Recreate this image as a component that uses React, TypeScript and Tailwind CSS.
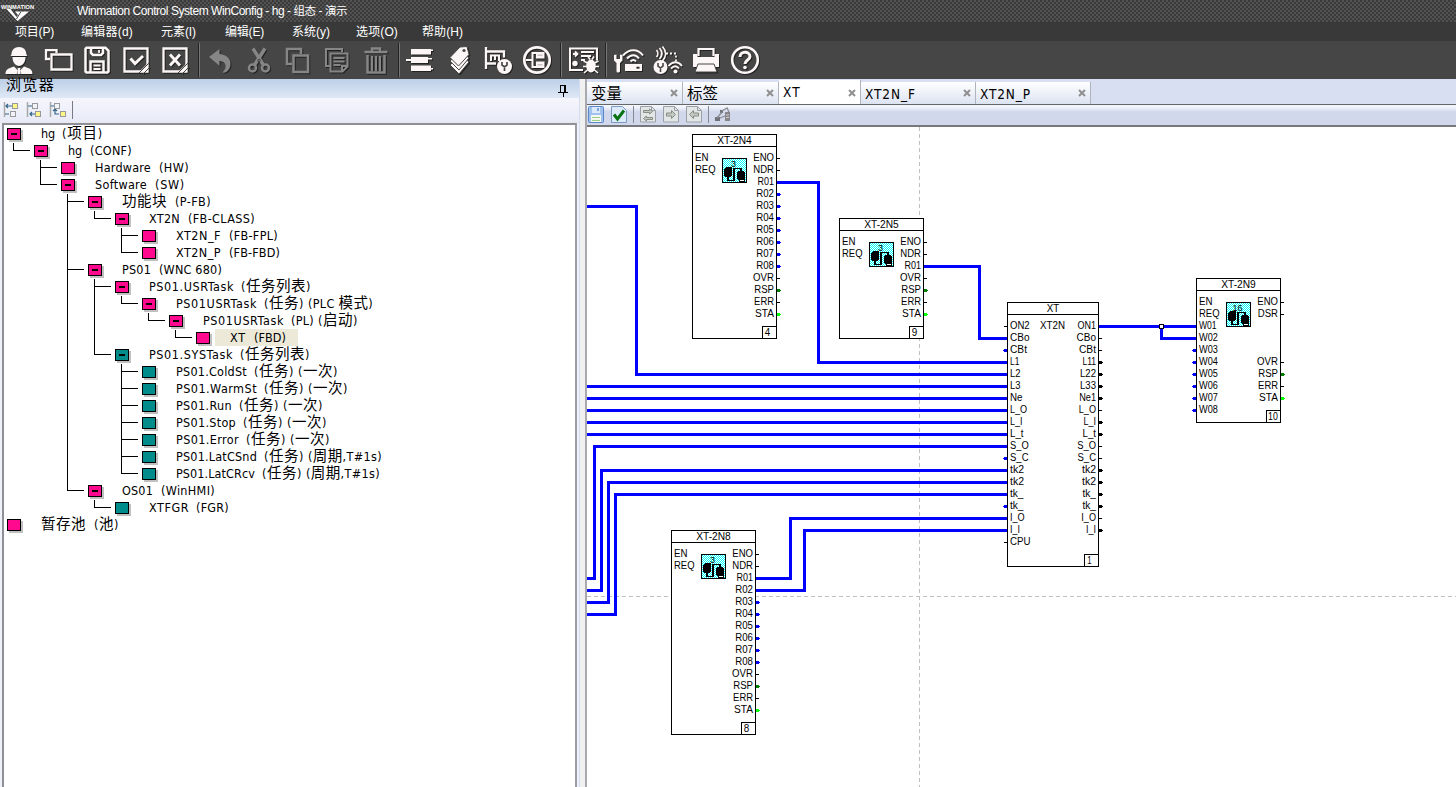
import React, { useLayoutEffect, useRef } from 'react';

/* Text stretched by letter spacing to a given width. */
function Fit({ text, w, className = '', cjk = '' }: { text: string; w: number; className?: string; cjk?: string }) {
  const ref = useRef<HTMLSpanElement>(null);
  useLayoutEffect(() => {
    const el = ref.current;
    if (!el) return;
    el.style.letterSpacing = '0px';
    const natural = el.getBoundingClientRect().width;
    el.style.letterSpacing = `${(w - natural) / text.length}px`;
  }, [text, w]);
  const parts = text.split(/([\u3400-\u9fff]+)/).filter(Boolean);
  return (
    <span className="block shrink-0" style={{ width: w }}>
      <span ref={ref} className={`block w-max whitespace-pre ${className}`}>
        {parts.map((p, i) => (/[\u3400-\u9fff]/.test(p) ? <span key={i} className={cjk}>{p}</span> : p))}
      </span>
    </span>
  );
}

type Seg = [string, number, number];
type Node = { level: number; color: 'pink' | 'teal'; open?: boolean; guides: string; segs: Seg[]; selected?: boolean };

/* guides: one letter per indent column. " " empty, "|" pass, "T" branch, "L" last */
const nodes: Node[] = [
  { level: 0, color: 'pink', open: true, guides: '', segs: [['hg', 41, 55], ['(项目)', 62, 103]] },
  { level: 1, color: 'pink', open: true, guides: 'L', segs: [['hg', 68, 82], ['(CONF)', 90, 132]] },
  { level: 2, color: 'pink', guides: ' T', segs: [['Hardware', 95, 151], ['(HW)', 159, 189]] },
  { level: 2, color: 'pink', open: true, guides: ' L', segs: [['Software', 95, 147], ['(SW)', 155, 185]] },
  { level: 3, color: 'pink', open: true, guides: '  T', segs: [['功能块', 122, 167], ['(P-FB)', 175, 211]] },
  { level: 4, color: 'pink', open: true, guides: '  |L', segs: [['XT2N', 149, 180], ['(FB-CLASS)', 188, 255]] },
  { level: 5, color: 'pink', guides: '  | T', segs: [['XT2N_F', 176, 221], ['(FB-FPL)', 229, 278]] },
  { level: 5, color: 'pink', guides: '  | L', segs: [['XT2N_P', 176, 221], ['(FB-FBD)', 229, 280]] },
  { level: 3, color: 'pink', open: true, guides: '  T', segs: [['PS01', 122, 151], ['(WNC 680)', 159, 222]] },
  { level: 4, color: 'pink', open: true, guides: '  |T', segs: [['PS01.USRTask', 149, 234], ['(任务列表)', 241, 311]] },
  { level: 5, color: 'pink', open: true, guides: '  ||L', segs: [['PS01USRTask', 176, 257], ['(任务)', 264, 304], ['(PLC 模式)', 308, 373]] },
  { level: 6, color: 'pink', open: true, guides: '  || L', segs: [['PS01USRTask', 203, 284], ['(PL)', 291, 314], ['(启动)', 318, 358]] },
  { level: 7, color: 'pink', guides: '  ||  L', segs: [['XT', 230, 246], ['(FBD)', 254, 286]], selected: true },
  { level: 4, color: 'teal', open: true, guides: '  |L', segs: [['PS01.SYSTask', 149, 233], ['(任务列表)', 240, 310]] },
  { level: 5, color: 'teal', guides: '  | T', segs: [['PS01.ColdSt', 176, 247], ['(任务)', 254, 294], ['(一次)', 298, 338]] },
  { level: 5, color: 'teal', guides: '  | T', segs: [['PS01.WarmSt', 176, 257], ['(任务)', 264, 304], ['(一次)', 308, 348]] },
  { level: 5, color: 'teal', guides: '  | T', segs: [['PS01.Run', 176, 232], ['(任务)', 239, 279], ['(一次)', 283, 323]] },
  { level: 5, color: 'teal', guides: '  | T', segs: [['PS01.Stop', 176, 236], ['(任务)', 243, 283], ['(一次)', 287, 327]] },
  { level: 5, color: 'teal', guides: '  | T', segs: [['PS01.Error', 176, 239], ['(任务)', 246, 286], ['(一次)', 290, 330]] },
  { level: 5, color: 'teal', guides: '  | T', segs: [['PS01.LatCSnd', 176, 257], ['(任务)', 264, 304], ['(周期,T#1s)', 308, 382]] },
  { level: 5, color: 'teal', guides: '  | L', segs: [['PS01.LatCRcv', 176, 255], ['(任务)', 262, 302], ['(周期,T#1s)', 306, 380]] },
  { level: 3, color: 'pink', open: true, guides: '  L', segs: [['OS01', 122, 153], ['(WinHMI)', 161, 215]] },
  { level: 4, color: 'teal', guides: '   L', segs: [['XTFGR', 149, 189], ['(FGR)', 196, 229]] },
  { level: 0, color: 'pink', guides: '', segs: [['暂存池', 41, 86], ['(池)', 94, 119]] },
];

function Guide({ kind }: { kind: string }) {
  return (
    <svg width="27" height="17" className="shrink-0" shapeRendering="crispEdges" fill="#000">
      {(kind === '|' || kind === 'T') && <rect x="6" y="0" width="1" height="17" />}
      {kind === 'L' && <rect x="6" y="0" width="1" height="8" />}
      {(kind === 'T' || kind === 'L') && <rect x="6" y="7" width="17" height="1" />}
    </svg>
  );
}

function TreeRow({ node }: { node: Node }) {
  let x = 7 + 27 * node.level + 16;
  return (
    <div className="flex h-[17px] items-start">
      {node.guides.split('').map((g, i) => <Guide key={i} kind={g} />)}
      <svg width="16" height="17" className="shrink-0" shapeRendering="crispEdges">
        <rect x="2" y="4" width="14" height="12" fill="#c0c0c0" />
        <rect x="0" y="2" width="14" height="12" fill="#000" />
        <rect x="1" y="3" width="12" height="10" fill={node.color === 'pink' ? '#ff0a8f' : '#008c8a'} />
        {node.open && <rect x="4" y="7" width="6" height="2" fill="#000" />}
      </svg>
      <div className={`-mt-px flex h-[17px] ${node.selected ? 'bg-[linear-gradient(to_right,transparent_3px,#ece9d8_3px)] pr-3' : ''}`}>
        {node.segs.map(([t, a, b], i) => {
          const gap = a - x;
          x = b;
          return (
            <span key={i} className="block h-[17px]" style={{ marginLeft: gap }}>
              <Fit text={t} w={b - a} className="h-[17px] text-[12.5px] leading-[17px]" cjk="text-[14.5px] leading-[14px]" />
            </span>
          );
        })}
      </div>
    </div>
  );
}

/* ---------- toolbar icons, 28px grid ---------- */
const S = { fill: 'none', stroke: 'currentColor' } as const;
const icons: Record<string, React.ReactNode> = {
  user: <g fill="currentColor"><path d="M6.5 8.5c0-4.500 3-7.500 7.500-7.500s7.500 3 7.500 7.500l1 1.500h-17z" /><path d="M7.500 11h13c0 5.500-3 9-6.500 9s-6.500-3.500-6.500-9z" /><path d="M.5 28c0-4.500 2.500-5.500 8.500-7.500l4 4-1.300 3.500zM27.500 28c0-4.500-2.500-5.500-8.500-7.500l-4 4 1.300 3.500z" /><path d="M12.500 22h3l-.5 2 .7 4h-3.400l.7-4z" /></g>,
  windows: <g {...S} strokeWidth="2.300"><path d="M6 13H2V4.200h10.500V7" /><path d="M7.500 8.500H27.500V23.500H7.500z" /></g>,
  save: <g {...S} strokeWidth="2.500"><path d="M3.500 1.800H22.500l3 3v20.700l-1 1H3.500l-1-1V2.800z" /><path d="M8 2v5l2 2h8l2-2V2M7.500 26V15.500h13V26" /><path d="M16 4v3M10.500 19.500h7M10.500 23h7" strokeWidth="1.800" /></g>,
  check: <g {...S} strokeWidth="2.300"><path d="M2.500 2.500h23v23h-23z" /><path d="M8.500 12.500l4.500 5L21 10" strokeWidth="3" /><path d="M26 17v9h-9z" fill="currentColor" stroke="none" /><path d="M17 27l10-10M21 28l7-7" stroke="#464646" strokeWidth="1" /></g>,
  cross: <g {...S} strokeWidth="2.300"><path d="M2.500 2.500h23v23h-23z" /><path d="M9 8.500l10 11M19 8.500l-10 11" strokeWidth="2.800" /><path d="M26 17v9h-9z" fill="currentColor" stroke="none" /><path d="M17 27l10-10M21 28l7-7" stroke="#464646" strokeWidth="1" /></g>,
  undo: <path fill="currentColor" d="M3 11L13.500 3v5C21 9 25 13 24.500 18c0 4-2 6.500-5 8.500h-3c5-5 4-11-3-11.500v5z" />,
  cut: <g {...S} strokeWidth="2.500"><circle cx="7.500" cy="22" r="3.500" /><circle cx="20.500" cy="22" r="3.500" /><path d="M9.500 19L20 2.500M18.500 19L8 2.500" strokeWidth="3.500" /><path d="M13 13.500h2v2h-2z" stroke="#464646" strokeWidth="1" /></g>,
  copy: <g {...S} strokeWidth="2.500"><path d="M8 18H3V3h14v5" /><path d="M9.500 9.500H24V26H9.500z" /></g>,
  paste: <g {...S} strokeWidth="2"><path d="M7 20H3V3h16v3" /><path d="M7.500 7.500h17v13l-5 5h-12z" /><path d="M10.500 12h11M10.500 15.500h11M10.500 19h7M19 25v-5h5" strokeWidth="2" /></g>,
  trash: <g {...S} strokeWidth="2"><path d="M2.500 6h23M10 5V2.500h8V5M5.500 9v17.500h17V9" strokeWidth="2.500" /><path d="M10 10v15M14 10v15M18 10v15" strokeWidth="2" /></g>,
  bars: <g fill="currentColor"><path d="M5 3h20v5.500H5zM5 11h17v6H5zM5 19.500h20v5.500H5z" /><path d="M0 13h6v2H0zM23 3.500h4v1.500h-4zM23 22h4v1.500h-4zM20 12h6v1.500h-6z" /></g>,
  tags: <g><g fill="currentColor" stroke="#464646" strokeWidth="1"><path d="M5 19L16 9l8 7-10 12z" /><path d="M5 15L16 5l8 7-10 12z" /><path d="M5 11.500L15 1l7-.5 2 8L13.500 20z" /></g><circle cx="19" cy="4.500" r="1.600" fill="#464646" /></g>,
  board: <g><path {...S} strokeWidth="2.300" d="M2 1v22M3 5.500h17v6M3 17.500h9" /><path {...S} strokeWidth="2" d="M7 15V9.500h8V15M11 9v5" /><circle cx="20.500" cy="20.500" r="7.500" fill="currentColor" /><path d="M18 16v3l2.500 2 2.500-2v-3M20.500 20v5" {...S} stroke="#464646" strokeWidth="1.700" /></g>,
  tree: <g><circle cx="14" cy="14" r="12.700" {...S} strokeWidth="2.700" /><path {...S} strokeWidth="2" d="M3 14h7M13 7h-3.500v14H13" /><path fill="currentColor" d="M13 6h8.500v6.500H13zM13 15.500h8.500V22H13z" /><path d="M14.500 9.300h5M14.500 18.700h5" stroke="#c9c4c4" strokeWidth="1.500" /></g>,
  debug: <g><path {...S} strokeWidth="2" d="M14 24H1V2.500h27v12" /><path {...S} strokeWidth="1.800" d="M4 8h4M6 5.500L8.500 8 6 10.500M12 6h13M12 10h10M12 14h4" /><circle cx="6" cy="17.500" r="2.700" fill="currentColor" /><ellipse cx="22" cy="20" rx="4.800" ry="6.500" fill="currentColor" /><path {...S} strokeWidth="1.600" d="M14.500 15l4 2M14 20.500h4M15 27l4-3.500M29.500 15l-4 2M30 20.500h-4M29 27l-4-3.500M19 10.500l2 3M25 10.500l-2 3" /></g>,
  wifi: <g><path fill="currentColor" d="M0 9v5.500L2.500 17v8c0 2 3.500 2 3.500 0v-8l2.500-2.500V9L6 8.500V13H2.500V8.500z" /><path {...S} strokeWidth="2" d="M9 9.500c6-7 15-7 20 0M13 12.500c4-4.500 9-4.500 12 0M16.500 15.500c2-2 4-2 5.500 0" /><path fill="currentColor" fillRule="evenodd" d="M11 18h17v7H11zM22.500 20.700v2h3v-2z" /></g>,
  link: <g><path {...S} strokeWidth="1.700" d="M3.500 4c1.800 2 1.800 5 0 7M6.500 2c3 3.500 3 7.500 0 11M9.500.5c4 4.500 4 10 0 14.500" /><path {...S} strokeWidth="1.800" strokeDasharray="2 2" d="M13 7.500h10V17" /><circle cx="7.500" cy="21" r="7" fill="currentColor" /><path d="M5 17v3l2.500 2L10 20v-3M7.500 21v5" {...S} stroke="#464646" strokeWidth="1.600" /><path {...S} strokeWidth="1.800" d="M15.500 20c4.500-5 9.500-5 13.500 0M18 22.500c3-3 5.500-3 8 0" /><circle cx="22.500" cy="25.500" r="2" fill="currentColor" /></g>,
  print: <g><path {...S} strokeWidth="2.200" d="M6.500 10V3h15v7" /><path fill="currentColor" d="M1 8h4.500v3h17V8H27v13H1z" /><path fill="currentColor" d="M6 18h16l3 8H3z" stroke="#464646" strokeWidth="1" /></g>,
  help: <g {...S} strokeWidth="2.600"><circle cx="14" cy="14" r="12.800" /><path d="M9 11c0-6.500 10-6 10-.5 0 3.500-5 3.500-5 7.500" strokeWidth="3" /><circle cx="14" cy="21.500" r="1.800" fill="currentColor" stroke="none" /></g>,
};

function Tool({ name, dim }: { name: string; dim?: boolean }) {
  return (
    <button className={`flex w-[39px] shrink-0 justify-center ${dim ? 'text-[#868686]' : 'text-[#fdf6f6]'}`}>
      <svg width="29" height="29" viewBox="0 0 29 29" className="overflow-visible drop-shadow-[1px_1px_0_#222]">{icons[name]}</svg>
    </button>
  );
}

const Sep = () => <div className="mx-px h-[34px] w-[2px] shrink-0 border-l border-black/70 bg-[#777]" />;

const menus: [string, number, number][] = [
  ['项目(P)', 15, 54], ['编辑器(d)', 81, 133], ['元素(I)', 161, 196], ['编辑(E)', 225, 264],
  ['系统(y)', 292, 330], ['选项(O)', 356, 398], ['帮助(H)', 422, 463],
];

/* ---------- block diagram ---------- */
const advance: Record<string, number> = {
  E: 6.5, N: 7, O: 7.2, R: 6.7, Q: 7.3, D: 7, V: 7, S: 6.5, P: 6.5, T: 6, A: 6.5, C: 7, B: 6.5, U: 7, W: 7.8, X: 6.5,
  L: 5, I: 2.5, '1': 4.3, '_': 5, t: 3.5, k: 5, o: 6, e: 5.5, '-': 4,
};
const widthOf = (s: string) => s.split('').reduce((a, c) => a + (advance[c] ?? 5.5), 0);

function Label({ s, x, y, anchor = 'l' }: { s: string; x: number; y: number; anchor?: 'l' | 'r' | 'm' }) {
  const w = widthOf(s);
  const left = anchor === 'l' ? x : anchor === 'r' ? x - w : x - w / 2;
  return <text x={left} y={y} textLength={w} lengthAdjust="spacingAndGlyphs">{s}</text>;
}

type Pin = { s: string; r: number; c?: string };
const BLUE = '#0000ff';
const K = '#000';

function Pins({ x, y, c, side }: { x: number; y: number; c: string; side: 'l' | 'r' }) {
  const thin = c === 'thin';
  if (side === 'r') return thin ? <rect x={x} y={y} width="3" height="1" /> : <g fill={c}><rect x={x} y={y - 1} width="3" height="3" /><rect x={x + 3} y={y} width="1" height="1" /></g>;
  return thin ? <rect x={x - 3} y={y} width="3" height="1" /> : <g fill={c}><rect x={x - 3} y={y - 1} width="3" height="3" /><rect x={x - 4} y={y} width="1" height="1" /></g>;
}

function Block({ x, y, w, h, title, num, left, right, badge, sub }: {
  x: number; y: number; w: number; h: number; title: string; num: string; left: Pin[]; right: Pin[]; badge?: string; sub?: string;
}) {
  const nb = 14;
  return (
    <g>
      <rect x={x + 0.5} y={y + 0.5} width={w} height={h} fill="#fff" stroke="#000" />
      <rect x={x} y={y + 12} width={w} height="1" />
      <path d={`M${x + w - nb + 0.5} ${y + h}v-11.500h${nb}`} fill="none" stroke="#000" />
      <Label s={title} x={x + w / 2 + 0.5} y={y + 10} anchor="m" />
      <Label s={num} x={x + w - nb / 2 + (num.length > 1 ? 0 : -1.5)} y={y + h - 2} anchor="m" />
      {sub && <Label s={sub} x={x + 33} y={y + 27} />}
      {left.map((p) => <g key={`l${p.r}`}><Label s={p.s} x={x + 3} y={y + 27 + 12 * p.r} />{p.c && <Pins x={x} y={y + 24 + 12 * p.r} c={p.c} side="l" />}</g>)}
      {right.map((p) => <g key={`r${p.r}`}><Label s={p.s} x={x + w - 2} y={y + 27 + 12 * p.r} anchor="r" />{p.c && <Pins x={x + w + 1} y={y + 24 + 12 * p.r} c={p.c} side="r" />}</g>)}
      {badge && (
        <g transform={`translate(${x + 30} ${y + 24})`}>
          <rect x="0.500" y="0.500" width="24" height="24" fill="url(#dither)" stroke="#000" />
          <text x={11.5} y="8.500" textAnchor="middle" className="text-[9px]">{badge}</text>
          <rect x="4" y="9" width="5" height="3" fill="#fff" stroke="#000" strokeWidth="1" />
          <rect x="2" y="11" width="8" height="7" /><rect x="3" y="10" width="6" height="9" />
          <rect x="15" y="14" width="8" height="7" /><rect x="16" y="13" width="6" height="9" />
          <rect x="17" y="21" width="5" height="2" fill="#fff" stroke="#000" strokeWidth="1" />
          <path d="M6 18v4.500h6V10.500h7v3" fill="none" stroke="#000" strokeWidth="1.500" />
        </g>
      )}
    </g>
  );
}

const GREEN = '#008000';
const LIME = '#00ff00';
const reader = (wired: number): Pin[] => [
  { s: 'ENO', r: 0, c: 'thin' }, { s: 'NDR', r: 1, c: 'thin' },
  ...[1, 2, 3, 4, 5, 6, 7, 8].map((n) => ({ s: `R0${n}`, r: n + 1, c: n > wired ? BLUE : undefined })),
  { s: 'OVR', r: 10, c: 'thin' }, { s: 'RSP', r: 11, c: GREEN }, { s: 'ERR', r: 12, c: 'thin' }, { s: 'STA', r: 13, c: LIME },
];
const enReq: Pin[] = [{ s: 'EN', r: 0 }, { s: 'REQ', r: 1 }];
const xtLeft = ['ON2', 'CBo', 'CBt', 'L1', 'L2', 'L3', 'Ne', 'L_O', 'L_I', 'L_t', 'S_O', 'S_C', 'tk2', 'tk2', 'tk_', 'tk_', 'I_O', 'I_I', 'CPU'];
const xtRight = ['ON1', 'CBo', 'CBt', 'L11', 'L22', 'L33', 'Ne1', 'L_O', 'L_I', 'L_t', 'S_O', 'S_C', 'tk2', 'tk2', 'tk_', 'tk_', 'I_O', 'I_I'];
const xtThin = [1, 2, 7, 10, 11, 16];

function Diagram() {
  return (
    <svg width="869" height="660" viewBox="587 127 869 660" className="block font-['Liberation_Sans',sans-serif] text-[10px]" shapeRendering="crispEdges">
      <defs>
        <pattern id="dither" width="2" height="2" patternUnits="userSpaceOnUse">
          <rect width="2" height="2" fill="#fff" /><rect width="1" height="1" fill="#00ffff" /><rect x="1" y="1" width="1" height="1" fill="#00ffff" />
        </pattern>
      </defs>
      <g stroke="#c0c0c0" fill="none" strokeDasharray="4 3">
        <path d="M919.500 127V787" /><path d="M587 596.500H1456" />
      </g>
      <g stroke={BLUE} strokeWidth="3" fill="none">
        <path d="M587 206.500H636.500V374.500H1007" />
        <path d="M777 182.500H818.500V362.500H1007" />
        <path d="M924 266.500H979.500V338.500H1007" />
        <path d="M587 386.500H1007M587 398.500H1007M587 410.500H1007M587 422.500H1007M587 434.500H1007" />
        <path d="M587 578.500H594.500V446.500H1007" />
        <path d="M587 590.500H601.500V470.500H1007" />
        <path d="M587 602.500H608.500V482.500H1007" />
        <path d="M587 614.500H615.500V494.500H1007" />
        <path d="M756 578.500H790.500V518.500H1007" />
        <path d="M756 590.500H804.500V530.500H1007" />
        <path d="M1099 326.500H1196M1161.500 326.500V338.500H1196" />
      </g>
      <rect x="1159.500" y="324.500" width="4" height="4" fill="#fff" stroke="#000" />
      <Block x={692} y={134} w={84} h={204} title="XT-2N4" num="4" left={enReq} right={reader(1)} badge="3" />
      <Block x={839} y={218} w={84} h={120} title="XT-2N5" num="9" left={enReq} badge="3"
        right={[{ s: 'ENO', r: 0, c: 'thin' }, { s: 'NDR', r: 1, c: 'thin' }, { s: 'R01', r: 2 }, { s: 'OVR', r: 3, c: 'thin' }, { s: 'RSP', r: 4, c: GREEN }, { s: 'ERR', r: 5, c: 'thin' }, { s: 'STA', r: 6, c: LIME }]} />
      <Block x={671} y={530} w={84} h={204} title="XT-2N8" num="8" left={enReq} right={reader(2)} badge="3" />
      <Block x={1007} y={302} w={91} h={264} title="XT" num="1" sub="XT2N"
        left={xtLeft.map((s, r) => ({ s, r, c: r === 0 || r === 18 ? 'thin' : [2, 11, 15].includes(r) ? BLUE : undefined }))}
        right={xtRight.map((s, r) => ({ s, r, c: r === 0 ? undefined : xtThin.includes(r) ? 'thin' : K }))} />
      <Block x={1196} y={278} w={84} h={144} title="XT-2N9" num="10" badge="16"
        left={[...enReq, ...[1, 2, 3, 4, 5, 6, 7, 8].map((n) => ({ s: `W0${n}`, r: n + 1, c: n > 2 ? BLUE : undefined }))]}
        right={[{ s: 'ENO', r: 0, c: 'thin' }, { s: 'DSR', r: 1, c: 'thin' }, { s: 'OVR', r: 5, c: 'thin' }, { s: 'RSP', r: 6, c: GREEN }, { s: 'ERR', r: 7, c: 'thin' }, { s: 'STA', r: 8, c: LIME }]} />
    </svg>
  );
}

const tabs: { t: string; w: number; tw: number; active?: boolean; cjk?: boolean }[] = [
  { t: '变量', w: 96, tw: 31, cjk: true }, { t: '标签', w: 96, tw: 31, cjk: true }, { t: 'XT', w: 82, tw: 18, active: true },
  { t: 'XT2N_F', w: 115, tw: 51 }, { t: 'XT2N_P', w: 115, tw: 51 },
];

function Page({ d }: { d: string }) {
  return (
    <svg width="16" height="17" className="shrink-0">
      <path d="M.5 .5h11l4 4v11.500h-15z" fill="#e2e6e6" stroke="#9ba0a6" /><path d="M11.500 .5v4h4" fill="none" stroke="#9ba0a6" />
      <path d={d} fill="#c4cbc4" stroke="#848c84" strokeWidth="1" />
    </svg>
  );
}

const browserTools = [
  { a: 'M3 5H9M5 3L3 5L5 7M2 13H6', y1: 2, x1: 9, c1: true, x2: 7, y2: 10 },
  { a: 'M2 5H6M4 13H9M6 11L4 13L6 15', y1: 2, x1: 6, c1: false, x2: 9, y2: 10 },
  { a: 'M2 5H5M6 8V13H10M4 10L6 8L8 10', y1: 2, x1: 5, c1: false, x2: 11, y2: 10 },
];

export default function App() {
  return (
    <div className="flex h-[787px] w-[1456px] flex-col overflow-hidden bg-white font-['DejaVu_Sans_Condensed','DejaVu_Sans','Noto_Sans_CJK_SC',sans-serif] text-black">
      <header className="shrink-0 text-white">
        <div className="flex h-[22px] items-center bg-[#525252] bg-[radial-gradient(ellipse_1.6px_0.9px_at_1px_1px,#3a3a3a_90%,transparent),radial-gradient(ellipse_1.6px_0.9px_at_3px_3px,#3a3a3a_90%,transparent)] bg-size-[4px_4px] font-['Liberation_Sans','Noto_Sans_CJK_SC',sans-serif]">
          <svg width="77" height="22" className="shrink-0">
            <text x="1" y="9" textLength="33" lengthAdjust="spacingAndGlyphs" className="fill-white text-[6px] font-bold">WINMATION</text>
            <path d="M6.500 9h4l6 8 1.500-2-3-3.500h14L17.500 21z" fill="#fff" /><path d="M11.500 9.300l5.500 6.500M21 11.500L16.500 19" stroke="#444" strokeWidth="1" />
          </svg>
          <Fit text="Winmation Control System WinConfig - hg - 组态 - 演示" w={270} className="text-[12px] leading-[20px]" cjk="text-[11.500px]" />
        </div>
        <nav className="flex h-[19px] bg-[#393939] font-['Liberation_Sans','Noto_Sans_CJK_SC',sans-serif]">
          {menus.map(([t, a, b], i) => (
            <span key={t} style={{ marginLeft: a - (i ? menus[i - 1][2] : 0) }}>
              <Fit text={t} w={b - a} className="text-[12px] leading-[20px]" />
            </span>
          ))}
        </nav>
        <div className="flex h-[38px] items-center bg-[#464646]">
          {['user', 'windows', 'save', 'check', 'cross'].map((n) => <Tool key={n} name={n} />)}
          <div className="ml-[2px]"><Sep /></div>
          {['undo', 'cut', 'copy', 'paste', 'trash'].map((n) => <Tool key={n} name={n} dim />)}
          <div className="ml-px"><Sep /></div>
          {['bars', 'tags', 'board', 'tree'].map((n) => <Tool key={n} name={n} />)}
          <div className="ml-[2px] mr-px"><Sep /></div>
          <Tool name="debug" />
          <div className="ml-px mr-px"><Sep /></div>
          {['wifi', 'link', 'print', 'help'].map((n) => <Tool key={n} name={n} />)}
        </div>
      </header>
      <div className="flex min-h-0 flex-1">
        <aside className="flex w-[579px] shrink-0 flex-col bg-[#eff1fa]">
          <div className="flex h-[19px] items-start justify-between bg-linear-to-b from-[#bccfe7] to-[#dfe8f6] pl-[6px] pr-[10px]">
            <Fit text="浏览器" w={49} className="-mt-px text-[15px] leading-[14px]" />
            <svg width="11" height="13" className="mt-[6px]" fill="none" stroke="#000" shapeRendering="crispEdges"><path d="M2.500 7.500V.5h5v7M6.500 1v6.500M0 7.500h10M5.500 8v4" /></svg>
          </div>
          <div className="flex h-[25px] items-start border-b border-[#e8e8e8] bg-linear-to-b from-[#f5f6fd] to-[#e8ebf7] pl-[3px] pt-[3px]">
            {browserTools.map((b, i) => (
              <svg key={i} width="23" height="17" fill="none">
                <path d="M1.500 1v15" stroke="#a8a8a8" strokeWidth="1.500" />
                <path d={b.a} stroke="#336688" strokeWidth="1.200" />
                <rect x={b.x1 + 0.5} y={b.y1 + 0.5} width="5" height="5" fill={b.c1 ? '#fff68a' : '#f3f3fa'} stroke="#999" />
                <rect x={b.x2 + 0.5} y={b.y2 + 0.5} width="5" height="5" fill={b.c1 ? '#f3f3fa' : '#fff68a'} stroke="#999" />
              </svg>
            ))}
            <div className="h-[18px] w-px bg-[#777b88]" />
          </div>
          <div className="ml-[2px] mr-[2px] flex-1 border-2 border-b-0 border-[#8d9097] border-r-[#9a9da4] bg-white pl-[3px] pt-px">
            {nodes.map((n, i) => <TreeRow key={i} node={n} />)}
          </div>
        </aside>
        <div className="w-[8px] shrink-0 border-l border-r-2 border-[#d5ddf0] border-r-[#a9a9ad] bg-[#f0f0f0]" />
        <main className="flex min-w-0 flex-1 flex-col">
          <div className="flex h-[25px] items-end bg-[#d9dff2] pt-px">
            {tabs.map((t) => (
              <div key={t.t} className={`flex shrink-0 items-center justify-between border-r border-[#b0b4bd] pl-[4px] pr-[4px] ${t.active ? 'h-[24px] bg-white' : 'h-[22px] bg-linear-to-b from-white to-[#dce3f1]'}`} style={{ width: t.w }}>
                <Fit text={t.t} w={t.tw} className={t.cjk ? 'pt-px text-[15.500px] leading-[20px]' : t.active ? 'text-[13.500px] leading-[20px]' : 'pt-px text-[13.500px] leading-[20px]'} />
                <svg width="8" height="8" className={t.active ? 'mt-px' : ''}><path d="M1 1l6 6M7 1L1 7" stroke="#8f8f8f" strokeWidth="2" /></svg>
              </div>
            ))}
          </div>
          <div className="flex h-[23px] items-start border-b-2 border-t border-b-[#77787c] border-t-[#66676b] bg-linear-to-b from-[#f2f5fb] from-10% to-[#d2d8eb] to-35% pl-px pt-px">
            <svg width="16" height="17"><rect x=".5" y=".5" width="15" height="16" rx="1" fill="#9fc3ee" stroke="#5a86c8" /><path d="M4 1h8v6H4z" fill="#dce9fa" /><path d="M9 2h2v3H9z" fill="#77a5e2" /><path d="M3 9h10v7H3z" fill="#f4f8f0" /><path d="M4 11.500h8M4 14.500h8" stroke="#9ccc8a" /></svg>
            <svg width="16" height="17" className="ml-[7px]"><path d="M.5 .5h11l4 4v12h-15z" fill="#dcebfa" stroke="#7d9bc0" /><path d="M3 8.500l3.500 4.500L13 4.500" fill="none" stroke="#087312" strokeWidth="3" /></svg>
            <div className="ml-[6px] mr-[6px] h-[17px] w-px bg-[#858a96]" />
            <div className="flex gap-[7px]">
              <Page d="M3.500 4.500h6v-1.500l3 2.500-3 2.500v-1.500h-6zM12.500 11.500h-6V10l-3 2.500 3 2.500v-1.500h6z" />
              <Page d="M3.500 7h5V4.500l4 4-4 4V10h-5z" />
              <Page d="M12.500 7h-5V4.500l-4 4 4 4V10h5z" />
            </div>
            <div className="ml-[6px] h-[17px] w-px bg-[#858a96]" />
            <svg width="18" height="17" className="ml-[5px]"><path d="M1 11h5v4H1zM6 4h3v3H6z" fill="#707078" /><path d="M11 6h5v9h-5z" fill="#85858a" /><path d="M12 9h3M12 11.500h3" stroke="#cfcfd2" /><path d="M3 12l5-6M8 5l5-3 2 4M6 12l5-2" stroke="#8a8c92" fill="none" strokeWidth="1.300" /></svg>
          </div>
          <Diagram />
        </main>
      </div>
    </div>
  );
}
